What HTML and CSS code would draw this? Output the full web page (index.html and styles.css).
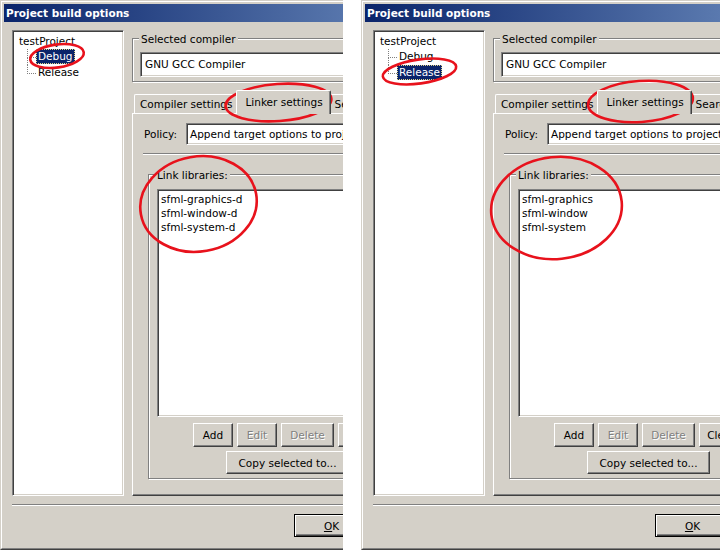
FILE: index.html
```html
<!DOCTYPE html>
<html>
<head>
<meta charset="utf-8">
<title>Project build options</title>
<link rel="stylesheet" href="styles.css">
</head>
<body>
<div class="screens">
  <div class="shot shot-left">
    <div class="dialog">
      <div class="dialog-inner">
        <div class="titlebar">Project build options</div>
        <div class="client">
          <div class="main">
            <div class="tree">
              <div class="tree-row">testProject</div>
              <ul class="children">
                <li><span class="node sel">Debug</span></li>
                <li><span class="node">Release</span></li>
              </ul>
            </div>
            <div class="right">
              <div class="group compiler-group">
                <span class="group-label">Selected compiler</span>
                <div class="combo">GNU GCC Compiler</div>
              </div>
              <div class="notebook">
                <div class="tabs">
                  <div class="tab">Compiler settings</div>
                  <div class="tab active">Linker settings</div>
                  <div class="tab">Search directories</div>
                  <div class="tab">Pre/post build steps</div>
                </div>
                <div class="page">
                  <div class="policy-row">
                    <span class="policy-label">Policy:</span>
                    <div class="edit">Append target options to project options</div>
                  </div>
                  <div class="hsep"></div>
                  <div class="group libs-group">
                    <span class="group-label">Link libraries:</span>
                    <div class="listbox">
                      <div class="item">sfml-graphics-d</div>
                      <div class="item">sfml-window-d</div>
                      <div class="item">sfml-system-d</div>
                    </div>
                    <div class="btn-row">
                      <button class="btn w-add">Add</button>
                      <button class="btn w-edit disabled">Edit</button>
                      <button class="btn w-del disabled">Delete</button>
                      <button class="btn w-clear">Clear</button>
                    </div>
                    <div class="btn-row copy-row">
                      <button class="btn w-copy">Copy selected to...</button>
                    </div>
                  </div>
                </div>
              </div>
            </div>
          </div>
          <div class="sep"></div>
          <div class="footer">
            <button class="btn btn-default"><u>O</u>K</button>
            <button class="btn btn-cancel">Cancel</button>
          </div>
        </div>
      </div>
    </div>
    <svg class="marks" width="343" height="550" viewBox="0 0 343 550">
      <ellipse cx="57" cy="56" rx="27" ry="11.5" transform="rotate(-8 57 56)"/>
      <ellipse cx="278.5" cy="102.5" rx="53" ry="18.5" transform="rotate(-4 278.5 102.5)"/>
      <ellipse cx="198.5" cy="204" rx="58.5" ry="47.5" transform="rotate(-10 198.5 204)"/>
    </svg>
  </div>

  <div class="shot shot-right">
    <div class="dialog">
      <div class="dialog-inner">
        <div class="titlebar">Project build options</div>
        <div class="client">
          <div class="main">
            <div class="tree">
              <div class="tree-row">testProject</div>
              <ul class="children">
                <li><span class="node">Debug</span></li>
                <li><span class="node sel">Release</span></li>
              </ul>
            </div>
            <div class="right">
              <div class="group compiler-group">
                <span class="group-label">Selected compiler</span>
                <div class="combo">GNU GCC Compiler</div>
              </div>
              <div class="notebook">
                <div class="tabs">
                  <div class="tab">Compiler settings</div>
                  <div class="tab active">Linker settings</div>
                  <div class="tab">Search directories</div>
                  <div class="tab">Pre/post build steps</div>
                </div>
                <div class="page">
                  <div class="policy-row">
                    <span class="policy-label">Policy:</span>
                    <div class="edit">Append target options to project options</div>
                  </div>
                  <div class="hsep"></div>
                  <div class="group libs-group">
                    <span class="group-label">Link libraries:</span>
                    <div class="listbox">
                      <div class="item">sfml-graphics</div>
                      <div class="item">sfml-window</div>
                      <div class="item">sfml-system</div>
                    </div>
                    <div class="btn-row">
                      <button class="btn w-add">Add</button>
                      <button class="btn w-edit disabled">Edit</button>
                      <button class="btn w-del disabled">Delete</button>
                      <button class="btn w-clear">Clear</button>
                    </div>
                    <div class="btn-row copy-row">
                      <button class="btn w-copy">Copy selected to...</button>
                    </div>
                  </div>
                </div>
              </div>
            </div>
          </div>
          <div class="sep"></div>
          <div class="footer">
            <button class="btn btn-default"><u>O</u>K</button>
            <button class="btn btn-cancel">Cancel</button>
          </div>
        </div>
      </div>
    </div>
    <svg class="marks" width="359" height="550" viewBox="0 0 359 550">
      <ellipse cx="58.5" cy="71.5" rx="37" ry="12" transform="rotate(-8 58.5 71.5)"/>
      <ellipse cx="279.5" cy="101.5" rx="52.5" ry="20.5" transform="rotate(-4 279.5 101.5)"/>
      <ellipse cx="195.5" cy="208" rx="65.5" ry="51" transform="rotate(-6 195.5 208)"/>
    </svg>
  </div>
</div>
</body>
</html>
```

FILE: styles.css
```css
html, body {
  margin: 0;
  padding: 0;
  background: #ffffff;
}

body {
  font-family: "DejaVu Sans", "Liberation Sans", sans-serif;
  font-size: 10.5px;
  color: #000000;
}

.screens {
  display: flex;
  gap: 18px;
  height: 550px;
}

.shot {
  position: relative;
  flex: none;
  height: 550px;
  overflow: hidden;
}

.shot-left { width: 343px; }
.shot-right { width: 359px; }

.marks {
  position: absolute;
  left: 0;
  top: 0;
  pointer-events: none;
}

.marks ellipse {
  fill: none;
  stroke: #e8121c;
  stroke-width: 2.6;
}

/* window frame */
.dialog {
  width: 700px;
  height: 550px;
  box-sizing: border-box;
  border: 1px solid;
  border-color: #d4d0c8 #404040 #404040 #d4d0c8;
  background: #d4d0c8;
}

.dialog-inner {
  height: 100%;
  box-sizing: border-box;
  border: 1px solid;
  border-color: #ffffff #808080 #808080 #ffffff;
  padding: 2px;
  display: flex;
  flex-direction: column;
}

.titlebar {
  height: 18px;
  line-height: 18px;
  padding-left: 2px;
  background: linear-gradient(to right, #0a246a, #a6caf0);
  color: #ffffff;
  font-weight: bold;
  white-space: nowrap;
}

.client {
  flex: 1;
  display: flex;
  flex-direction: column;
  padding: 8px 8px 0;
}

.main {
  display: flex;
  gap: 8px;
  height: 466px;
}

/* tree */
.tree {
  width: 112px;
  flex: none;
  box-sizing: border-box;
  border: 1px solid;
  border-color: #808080 #ffffff #ffffff #808080;
  box-shadow: inset 1px 1px 0 #404040, inset -1px -1px 0 #d4d0c8;
  background: #ffffff;
  padding: 2px 0 0 6px;
  white-space: nowrap;
}

.tree-row {
  line-height: 16px;
}

.children {
  list-style: none;
  margin: 0;
  padding: 0;
}

.children li {
  position: relative;
  padding-left: 17px;
  height: 16px;
  line-height: 16px;
}

.children li::before {
  content: "";
  position: absolute;
  left: 8px;
  top: 0;
  width: 8px;
  height: 8px;
  border-left: 1px dotted #808080;
  border-bottom: 1px dotted #808080;
}

.children li:not(:last-child)::after {
  content: "";
  position: absolute;
  left: 8px;
  top: 9px;
  bottom: 0;
  border-left: 1px dotted #808080;
}

.node {
  display: inline-block;
  height: 15px;
  line-height: 15px;
  padding: 0 2px;
  vertical-align: top;
}

.node.sel {
  background: #0a246a;
  color: #ffffff;
  outline: 1px dotted #e0d48a;
  outline-offset: -1px;
}

/* right column */
.right {
  flex: 1;
  display: flex;
  flex-direction: column;
  padding-top: 8px;
  min-width: 0;
}

.group {
  display: flex;
  flex-direction: column;
  border: 1px solid #808080;
  box-shadow: inset 1px 1px 0 #ffffff, 1px 1px 0 #ffffff;
}

.group-label {
  align-self: flex-start;
  line-height: 13px;
  margin-top: -6px;
  padding: 0 2px;
  background: #d4d0c8;
  white-space: nowrap;
}

.compiler-group {
  padding: 0 7px 4px;
}

.compiler-group .group-label {
  margin-left: -1px;
}

.combo {
  margin-top: 6px;
  height: 25px;
  box-sizing: border-box;
  border: 1px solid;
  border-color: #808080 #ffffff #ffffff #808080;
  box-shadow: inset 1px 1px 0 #404040, inset -1px -1px 0 #d4d0c8;
  background: #ffffff;
  padding-left: 4px;
  line-height: 23px;
  white-space: nowrap;
}

/* notebook */
.notebook {
  flex: 1;
  display: flex;
  flex-direction: column;
  margin-top: 8px;
}

.tabs {
  display: flex;
  align-items: flex-end;
  height: 23px;
  padding-left: 2px;
  white-space: nowrap;
}

.tab {
  flex: none;
  height: 19px;
  box-sizing: border-box;
  line-height: 18px;
  padding: 0 5px;
  border-top: 1px solid #ffffff;
  border-left: 1px solid #ffffff;
  border-right: 1px solid #404040;
  box-shadow: inset -1px 0 0 #808080;
  border-radius: 2px 2px 0 0;
  background: #d4d0c8;
}

.tab.active {
  position: relative;
  z-index: 1;
  height: 24px;
  margin: 0 -2px -1px;
  padding: 2px 7px 0 8px;
}

.page {
  flex: 1;
  border: 1px solid;
  border-color: #ffffff #404040 #404040 #ffffff;
  box-shadow: inset -1px -1px 0 #808080;
  display: flex;
  flex-direction: column;
  align-items: flex-start;
}

.policy-row {
  align-self: stretch;
  display: flex;
  align-items: center;
  margin: 9px 10px 0 11px;
}

.policy-label {
  width: 42px;
  flex: none;
}

.edit {
  flex: 1;
  height: 22px;
  box-sizing: border-box;
  border: 1px solid;
  border-color: #808080 #ffffff #ffffff #808080;
  box-shadow: inset 1px 1px 0 #404040, inset -1px -1px 0 #d4d0c8;
  background: #ffffff;
  padding-left: 3px;
  line-height: 20px;
  white-space: nowrap;
  overflow: hidden;
}

.hsep {
  align-self: stretch;
  margin: 8px 10px 0;
  border-top: 1px solid #808080;
  border-bottom: 1px solid #ffffff;
}

.libs-group {
  width: 262px;
  margin: 19px 0 0 15px;
  padding: 0 8px 4px;
}

.libs-group .group-label {
  margin-left: -2px;
}

.listbox {
  margin-top: 7px;
  height: 228px;
  box-sizing: border-box;
  border: 1px solid;
  border-color: #808080 #ffffff #ffffff #808080;
  box-shadow: inset 1px 1px 0 #404040, inset -1px -1px 0 #d4d0c8;
  background: #ffffff;
  padding: 2px 3px;
}

.item {
  line-height: 14px;
  white-space: nowrap;
}

.btn-row {
  display: flex;
  gap: 4px;
  margin-top: 6px;
  padding-left: 36px;
}

.copy-row {
  margin-top: 4px;
  padding-left: 69px;
}

/* buttons */
.btn {
  flex: none;
  font: inherit;
  color: #000000;
  background: #d4d0c8;
  margin: 0;
  padding: 0;
  height: 24px;
  box-sizing: border-box;
  border: 1px solid;
  border-color: #ffffff #404040 #404040 #ffffff;
  box-shadow: inset -1px -1px 0 #808080;
  border-radius: 0;
  white-space: nowrap;
}

.btn.disabled {
  color: #808080;
  text-shadow: 1px 1px 0 #ffffff;
}

.w-add { width: 40px; }
.w-edit { width: 40px; }
.w-del { width: 53px; }
.w-clear { width: 44px; }
.w-copy { width: 123px; height: 23px; }

.sep {
  margin-top: 8px;
  border-top: 1px solid #808080;
  border-bottom: 1px solid #ffffff;
}

.footer {
  display: flex;
  gap: 6px;
  margin-top: 8px;
  padding-left: 282px;
}

.btn-default {
  width: 75px;
  height: 23px;
  border-color: #000000;
  box-shadow: inset 1px 1px 0 #ffffff, inset -1px -1px 0 #404040, inset -2px -2px 0 #808080;
}

.btn-cancel {
  width: 75px;
  height: 23px;
}
```
